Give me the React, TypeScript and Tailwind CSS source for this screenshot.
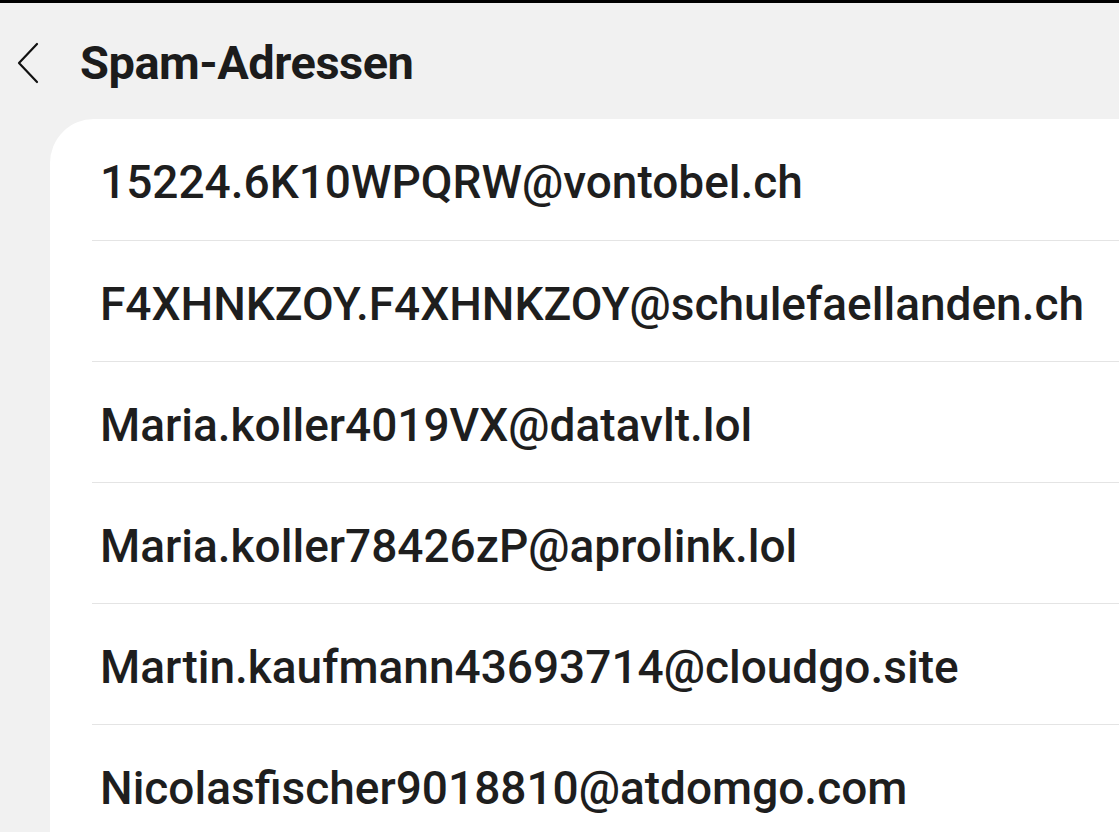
const addresses = [
  "15224.6K10WPQRW@vontobel.ch",
  "F4XHNKZOY.F4XHNKZOY@schulefaellanden.ch",
  "Maria.koller4019VX@datavlt.lol",
  "Maria.koller78426zP@aprolink.lol",
  "Martin.kaufmann43693714@cloudgo.site",
  "Nicolasfischer9018810@atdomgo.com",
];

function BackIcon() {
  return (
    <svg className="w-[24px] h-[42px] text-[#111]" viewBox="0 0 24 42" fill="none" aria-hidden="true">
      <path d="M21 2 L3 21 L21 40" stroke="currentColor" strokeWidth={2.2} strokeLinecap="round" strokeLinejoin="round" />
    </svg>
  );
}

export default function App() {
  return (
    <div className="w-[1119px] h-[832px] overflow-hidden bg-[#f1f1f1] border-t-[3px] border-black font-['Roboto','Liberation_Sans',sans-serif]">
      <header className="flex items-center h-[116px] pl-[16px] pt-[4px]">
        <BackIcon />
        <h1 className="ml-[40px] text-[47px] font-bold tracking-[-0.5px] text-[#1c1c1c]">Spam-Adressen</h1>
      </header>

      <ul className="ml-[50px] bg-white rounded-l-[44px] pl-[42px] pb-[40px]">
        {addresses.map((addr, i) => (
          <li
            key={addr}
            className={`flex items-center h-[121px] pt-[6px] pl-[8px] ${i > 0 ? "border-t border-[#e4e4e4]" : ""}`}
          >
            <span className="text-[46px] font-medium text-[#1e1e1e] whitespace-nowrap">{addr}</span>
          </li>
        ))}
      </ul>
    </div>
  );
}
